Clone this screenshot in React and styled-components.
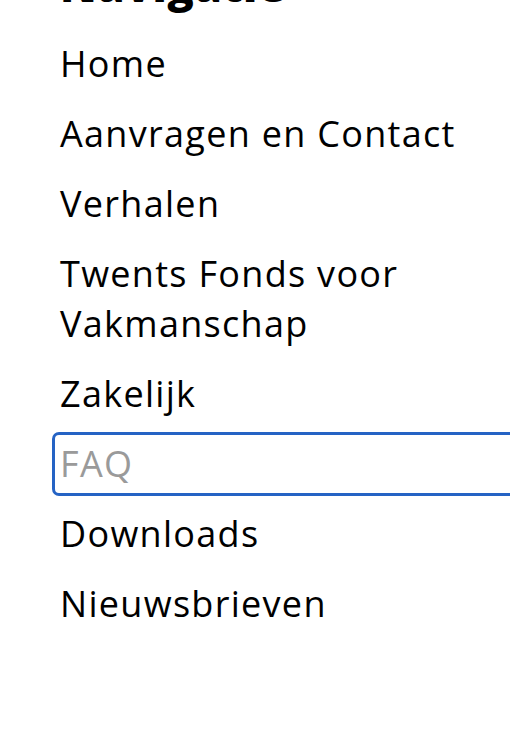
import React from 'react';
import styled, { createGlobalStyle } from 'styled-components';

const GlobalStyle = createGlobalStyle`
    html, body {
        margin: 0;
        padding: 0;
        background: #fff;
        overflow: hidden;
    }
    body {
        font-family: 'Open Sans', 'Noto Sans', sans-serif;
        color: #000;
    }
`;

const Nav = styled.nav`
    padding: 0 0 0 60px;
    width: 100%;
    box-sizing: border-box;
`;

const NavTitle = styled.h2`
    font-family: 'Open Sans', sans-serif;
    font-weight: 800;
    font-size: 44px;
    line-height: 50px;
    letter-spacing: 0.5px;
    margin: -40px 0 0 0;
`;

const NavList = styled.ul`
    list-style: none;
    margin: 29px 0 0 0;
    padding: 0;
    display: flex;
    flex-direction: column;
    gap: 20px;
`;

const NavItem = styled.li`
    margin: 0;
`;

const NavLink = styled.a`
    display: block;
    font-size: 36px;
    line-height: 50px;
    letter-spacing: 1.3px;
    color: ${({ $focused }) => ($focused ? '#9a9a9a' : '#000')};
    text-decoration: none;
    ${({ $focused }) => $focused && `
        border: 3px solid #2563c4;
        border-radius: 7px;
        margin: -7px -40px -7px -8px;
        padding: 4px 5px;
    `}
`;

const links = [
    'Home',
    'Aanvragen en Contact',
    'Verhalen',
    'Twents Fonds voor Vakmanschap',
    'Zakelijk',
    'FAQ',
    'Downloads',
    'Nieuwsbrieven',
];

const App = () => (
    <>
        <GlobalStyle />
        <Nav>
            <NavTitle>Navigatie</NavTitle>
            <NavList>
                {links.map((label) => (
                    <NavItem key={label}>
                        <NavLink href="#" $focused={label === 'FAQ'}>{label}</NavLink>
                    </NavItem>
                ))}
            </NavList>
        </Nav>
    </>
);

export default App;
